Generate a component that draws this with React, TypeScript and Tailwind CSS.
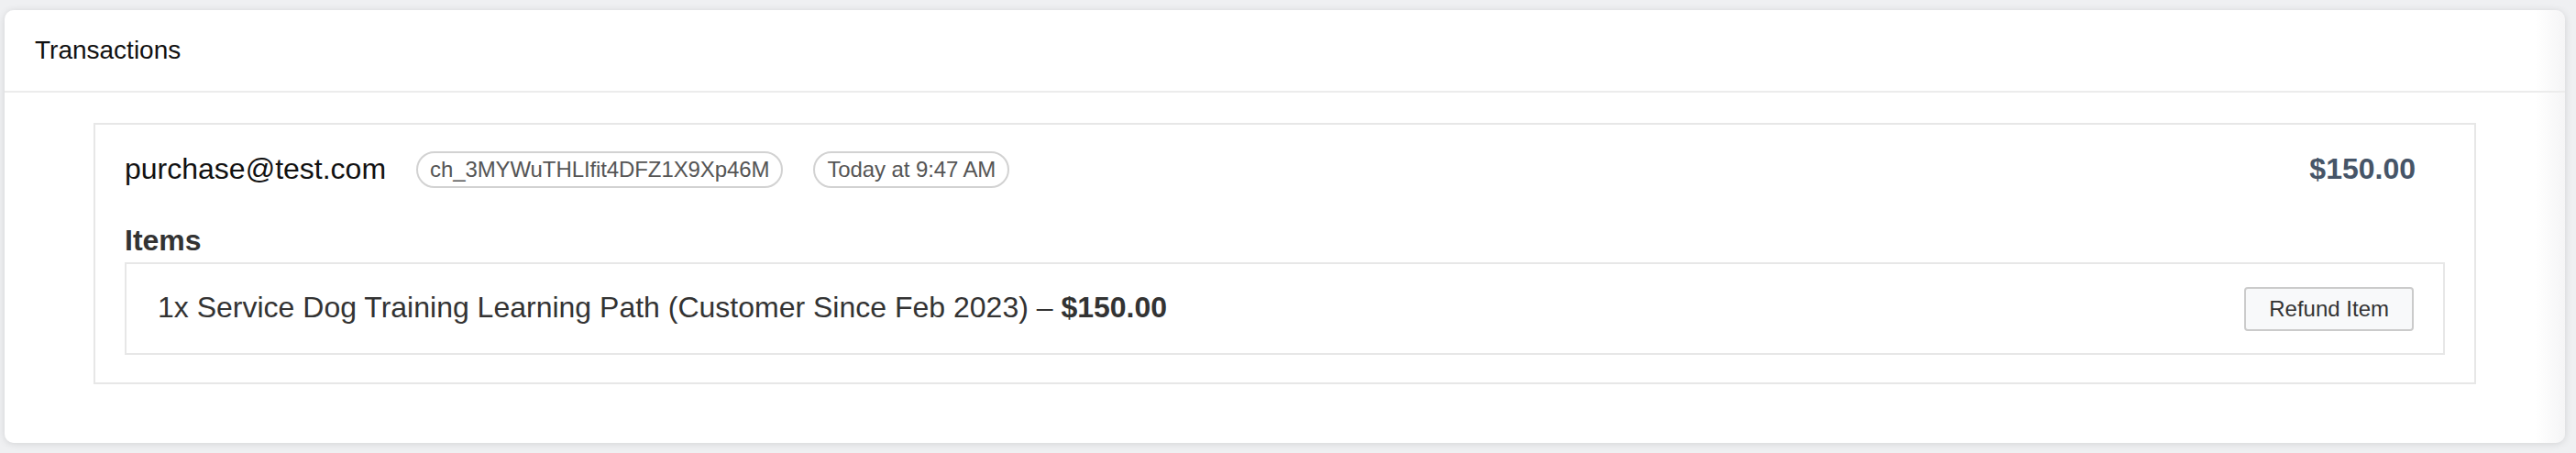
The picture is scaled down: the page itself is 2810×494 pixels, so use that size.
const transaction = {
  email: "purchase@test.com",
  chargeId: "ch_3MYWuTHLIfit4DFZ1X9Xp46M",
  createdAt: "Today at 9:47 AM",
  total: "$150.00",
  items: [
    {
      id: "item-1",
      label: "1x Service Dog Training Learning Path (Customer Since Feb 2023)",
      price: "$150.00"
    }
  ]
};

function Pill({ children }: { children: string }) {
  return (
    <span className="flex h-[40px] items-center rounded-full border-2 border-[#d2d2d2] px-[13px] text-[24px] leading-[28px] tracking-[-0.1px] text-[#555]">
      {children}
    </span>
  );
}

export default function App() {
  return (
    <div className="min-h-[494px] bg-[#eff0f2] pt-[11px] pr-[12px] pb-[12px] pl-[5px] font-['Liberation_Sans',Arial,sans-serif]">
      <div className="rounded-[10px] bg-[linear-gradient(to_right,#ffffff_calc(100%-32px),#f5f5f6)] shadow-[0_1px_8px_rgba(0,0,0,0.12)]">
        <div className="flex h-[90px] items-center border-b-2 border-[#ececec] px-[33px] text-[28px] leading-[32px] text-[#111]">
          Transactions
        </div>

        <div className="px-[97px] pt-[33px] pb-[64px]">
          <div className="border-2 border-[#e7e7e7] bg-white px-[32px] pt-[29px] pb-[30px]">
            <div className="flex h-[40px] items-center gap-[33px]">
              <span className="mb-[2px] text-[32px] leading-[36px] text-[#111]">{transaction.email}</span>
              <Pill>{transaction.chargeId}</Pill>
              <Pill>{transaction.createdAt}</Pill>
              <span className="mr-[32px] mb-[2px] ml-auto text-[32px] leading-[36px] font-bold text-[#465568]">{transaction.total}</span>
            </div>

            <h3 className="mt-[39px] text-[32px] leading-[36px] font-bold text-[#333]">Items</h3>

            {transaction.items.map((item) => (
              <div
                key={item.id}
                className="mt-[6px] flex h-[101px] items-center justify-between border-2 border-[#e7e7e7] pr-[32px] pl-[34px]"
              >
                <span className="mb-[4px] text-[32px] leading-[36px] text-[#333]">
                  {item.label} – <span className="font-bold">{item.price}</span>
                </span>
                <button className="h-[48px] rounded-[4px] border-2 border-[#cbcbcb] bg-[#f8f9fa] px-[25px] text-[24px] leading-[28px] text-[#333]">
                  Refund Item
                </button>
              </div>
            ))}
          </div>
        </div>
      </div>
    </div>
  );
}
